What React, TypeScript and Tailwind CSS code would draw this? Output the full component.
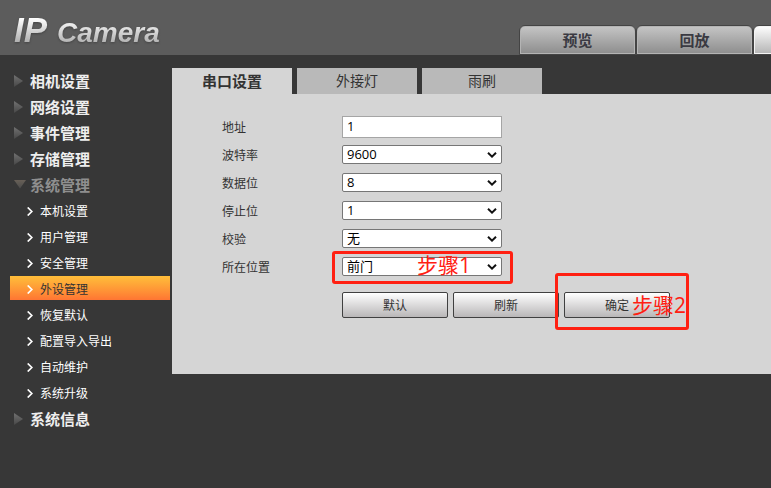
import { useState } from "react";

const topTabs = ["预览", "回放"];
const pageTabs = ["串口设置", "外接灯", "雨刷"];

const subItems = [
  "本机设置",
  "用户管理",
  "安全管理",
  "外设管理",
  "恢复默认",
  "配置导入导出",
  "自动维护",
  "系统升级",
];

const fields = [
  { id: "baud", label: "波特率", options: ["9600", "19200", "115200"] },
  { id: "data", label: "数据位", options: ["8", "7", "6", "5"] },
  { id: "stop", label: "停止位", options: ["1", "2"] },
  { id: "parity", label: "校验", options: ["无", "奇", "偶"] },
  { id: "position", label: "所在位置", options: ["前门", "后门"], step: "步骤1" },
];

function GroupLink({ label, open = false }: { label: string; open?: boolean }) {
  return (
    <a
      href="#"
      className={`flex h-[26px] items-center pl-[14px] text-[15px] leading-[26px] font-bold ${
        open ? "text-[#8f8f8f]" : "text-[#eeeeee]"
      }`}
    >
      <svg width="16" height="12" viewBox="0 0 16 12" className="shrink-0" aria-hidden="true">
        <defs>
          <linearGradient id="arrowFill" x1="0" y1="0" x2="0" y2="1">
            <stop offset="0" stopColor="#707070" />
            <stop offset="1" stopColor="#484848" />
          </linearGradient>
          <linearGradient id="arrowOpenFill" x1="0" y1="0" x2="0" y2="1">
            <stop offset="0" stopColor="#686057" />
            <stop offset="1" stopColor="#4c4c4c" />
          </linearGradient>
        </defs>
        {open ? (
          <path d="M0 1H12L6 9.500Z" fill="url(#arrowOpenFill)" />
        ) : (
          <path d="M0 0L9 6L0 12Z" fill="url(#arrowFill)" />
        )}
      </svg>
      {label}
    </a>
  );
}

function Sidebar() {
  return (
    <nav className="w-[172px] shrink-0 pt-[13px]">
      <GroupLink label="相机设置" />
      <GroupLink label="网络设置" />
      <GroupLink label="事件管理" />
      <GroupLink label="存储管理" />
      <GroupLink label="系统管理" open />
      <ul className="mr-[2px] ml-[10px]">
        {subItems.map((item) => (
          <li key={item} className="h-[26px]">
            <a
              href="#"
              className={`flex h-6 items-center gap-[7px] pl-[17px] text-xs leading-6 ${
                item === "外设管理"
                  ? "bg-linear-to-b from-[#ffbe3a] to-[#ff7533] text-[#333333]"
                  : "text-white"
              }`}
            >
              <svg width="6" height="9" viewBox="0 0 6 9" className="mt-[2px]" aria-hidden="true">
                <path d="M0.700 0.500L4.800 4.500L0.700 8.500" fill="none" stroke="#fff" strokeWidth="1.700" />
              </svg>
              <span className="mt-1">{item}</span>
            </a>
          </li>
        ))}
      </ul>
      <GroupLink label="系统信息" />
    </nav>
  );
}

function StepBox({ className, children }: { className: string; children: string }) {
  return (
    <div
      className={`pointer-events-none absolute flex items-center rounded-[3px] border-3 border-[#ff2012] text-[21px] leading-6 whitespace-nowrap text-[#ff2012] ${className}`}
    >
      {children}
    </div>
  );
}

const buttonClass =
  "h-[26px] w-[106px] rounded-[2px] border border-[#404040] bg-linear-to-b from-white to-[#b9b7b8] pt-[2px] text-xs text-[#333333]";

export default function App() {
  const [address, setAddress] = useState("1");

  return (
    <div className="min-h-screen overflow-hidden bg-[#373737] font-['Open_Sans','Noto_Sans_CJK_SC',sans-serif] text-[#333333]">
      <header className="flex h-[55px] items-end bg-[#5c5c5c]">
        <h1 className="flex w-[519px] shrink-0 items-baseline gap-[6px] self-start pt-[10px] pl-[14px] font-['Liberation_Sans',Arial,sans-serif] leading-10 font-bold italic drop-shadow-[0_1px_1px_#444]">
          <span className="bg-linear-to-b from-white from-20% to-[#aaaaaa] to-85% bg-clip-text pr-1 text-[35px] leading-10 text-transparent">
            IP
          </span>
          <span className="bg-linear-to-b from-white from-10% to-[#aaaaaa] to-85% bg-clip-text pr-1 text-[28px] leading-9 text-transparent">
            Camera
          </span>
        </h1>
        <nav className="flex">
          {topTabs.map((tab) => (
            <button
              key={tab}
              className="h-[30px] w-[117px] shrink-0 rounded-t-[6px] border border-[#444444] bg-linear-to-b from-[#c6c6c6] to-[#8d8d8d] text-[15px] font-bold text-[#3a3a42] inset-ring inset-ring-[#b4b4b4]"
            >
              {tab}
            </button>
          ))}
          <button
            aria-label="设置"
            className="h-[30px] w-[117px] shrink-0 rounded-t-[6px] border border-[#444444] bg-linear-to-b from-white to-[#b4b4b4] inset-ring inset-ring-[#f4f4f4]"
          />
        </nav>
      </header>

      <div className="flex">
        <Sidebar />
        <main className="min-w-0 flex-1 pt-[13px]">
          <div className="flex gap-[5px]">
            {pageTabs.map((tab, i) => (
              <button
                key={tab}
                className={`h-[26px] w-[120px] ${
                  i === 0 ? "bg-[#d5d5d5] text-[15px] font-bold" : "bg-[#b9b9b9] text-sm"
                }`}
              >
                {tab}
              </button>
            ))}
          </div>
          <form className="bg-[#d5d5d5] pt-[19px] pb-14 pl-[50px] text-xs" onSubmit={(e) => e.preventDefault()}>
            <div className="flex h-7 items-center">
              <label htmlFor="address" className="w-[120px] pt-[2px]">
                地址
              </label>
              <input
                id="address"
                value={address}
                onChange={(e) => setAddress(e.target.value)}
                className="h-[22px] w-[160px] border border-[#a5a5a5] bg-white px-1 pb-[2px] text-[13px] text-black"
              />
            </div>
            {fields.map((field) => (
              <div key={field.id} className="flex h-7 items-center">
                <label htmlFor={field.id} className="w-[120px] pt-[2px]">
                  {field.label}
                </label>
                <div className="relative pb-px">
                  <select
                    id={field.id}
                    className="block h-[19px] w-[160px] appearance-none rounded-[2px] border border-[#767676] bg-white px-1 pb-[2px] text-[13px] leading-4 text-black"
                  >
                    {field.options.map((option) => (
                      <option key={option}>{option}</option>
                    ))}
                  </select>
                  <svg
                    width="10"
                    height="6"
                    viewBox="0 0 10 6"
                    className="pointer-events-none absolute top-[7px] right-[5px]"
                    aria-hidden="true"
                  >
                    <path d="M1 0.800L5 4.600L9 0.800" fill="none" stroke="#111" strokeWidth="2" />
                  </svg>
                  {field.step && (
                    <StepBox className="-top-[6px] -left-[10px] h-[33px] w-[181px] pb-[5px] pl-[82px]">{field.step}</StepBox>
                  )}
                </div>
              </div>
            ))}
            <div className="mt-[11px] ml-[120px] flex gap-[5px]">
              <button type="button" className={buttonClass}>
                默认
              </button>
              <button type="button" className={buttonClass}>
                刷新
              </button>
              <div className="relative">
                <button type="submit" className={buttonClass}>
                  确定
                </button>
                <StepBox className="-top-[19px] -left-[9px] h-[57px] w-[134px] pt-[6px] pl-[74px]">步骤2</StepBox>
              </div>
            </div>
          </form>
        </main>
      </div>
    </div>
  );
}
